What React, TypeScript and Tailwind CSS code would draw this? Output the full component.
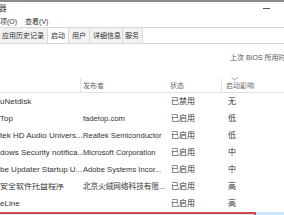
import React from "react";

const FONT = { fontFamily: '"Liberation Sans", "Noto Sans CJK SC", sans-serif' };

type Row = { name: string; publisher: string; status: string; impact: string };

const ROWS: Row[] = [
  { name: "uNetdisk", publisher: "", status: "已禁用", impact: "无" },
  { name: "Top", publisher: "fadetop.com", status: "已启用", impact: "低" },
  { name: "tek HD Audio Univers...", publisher: "Realtek Semiconductor", status: "已启用", impact: "低" },
  { name: "dows Security notifica...", publisher: "Microsoft Corporation", status: "已启用", impact: "中" },
  { name: "be Updater Startup U...", publisher: "Adobe Systems Incor...", status: "已启用", impact: "中" },
  { name: "安全软件托盘程序", publisher: "北京火绒网络科技有限...", status: "已启用", impact: "高" },
  { name: "eLine", publisher: "", status: "已启用", impact: "高" },
];

const TABS = [
  { label: "应用历史记录", cls: "pl-[2px] pr-[3px] w-[48px]" },
  { label: "启动", cls: "px-[3px] w-[21px] justify-center" },
  { label: "用户", cls: "pl-[3px] w-[21px]" },
  { label: "详细信息", cls: "pl-[3px] w-[33px]" },
  { label: "服务", cls: "pl-[2px] w-[20px]" },
];

export default function App() {
  return (
    <div className="w-[284px] h-[215px] overflow-hidden bg-white text-[8px] text-[#333] leading-none" style={FONT}>
      {/* title bar */}
      <div className="border-t-2 border-[#8d8d8d] h-[15px] flex items-center justify-between text-[7.5px]">
        <span className="-ml-[1px]">器</span>
        <span className="mr-[14px] w-[7px] h-[1px] bg-[#555]" />
      </div>

      {/* menu */}
      <div className="h-[12px] flex items-center gap-[8px] text-[7px]">
        <span>项(O)</span>
        <span>查看(V)</span>
      </div>

      {/* tabs */}
      <div className="h-[17px] flex border-t border-b border-[#d8d8d8] text-[7px]">
        {TABS.map((t) => (
          <div
            key={t.label}
            className={`flex items-center border-r border-[#d8d8d8] ${t.cls} ${
              t.label === "启动" ? "bg-white" : "bg-[#f2f2f2]"
            }`}>
            {t.label}
          </div>
        ))}
        <div className="flex-1 bg-white" />
      </div>

      {/* bios line */}
      <div className="h-[28px] flex items-center pl-[230px] pb-[2px] text-[7px] text-[#555] whitespace-nowrap">
        上次 BIOS 所用时
      </div>

      {/* header */}
      <div className="h-[21px] flex border-b border-[#e2e2e2] text-[7px] text-[#6b6b6b]">
        <div className="w-[81px] border-r border-[#e2e2e2] mt-[6px]" />
        <div className="w-[88px] flex items-center pl-[2px] pt-[6px]">发布者</div>
        <div className="w-[53px] border-r border-[#e2e2e2] mt-[6px] flex items-center pl-[1px]">状态</div>
        <div className="flex-1 relative flex items-center pl-[4px] pt-[6px]">
          <svg className="absolute left-[9px] top-[5px]" width="7" height="4" viewBox="0 0 7 4">
            <path d="M0.5 0.5 L3.5 3 L6.5 0.5" fill="none" stroke="#888" strokeWidth="0.8" />
          </svg>
          启动影响
        </div>
      </div>

      {/* rows */}
      {ROWS.map((r) => (
        <div key={r.name} className="h-[17px] flex items-center whitespace-nowrap">
          <div className="w-[83px] overflow-hidden">{r.name}</div>
          <div className="w-[88px] text-[7.6px]">{r.publisher}</div>
          <div className="w-[57px]">{r.status}</div>
          <div className="flex-1">{r.impact}</div>
        </div>
      ))}

      {/* selected row */}
      <div className="h-[17px] bg-[#cce8ff] flex">
        <div className="w-[256px] h-full border-t-2 border-r-2 border-[#cf4a4a]" />
      </div>
    </div>
  );
}
